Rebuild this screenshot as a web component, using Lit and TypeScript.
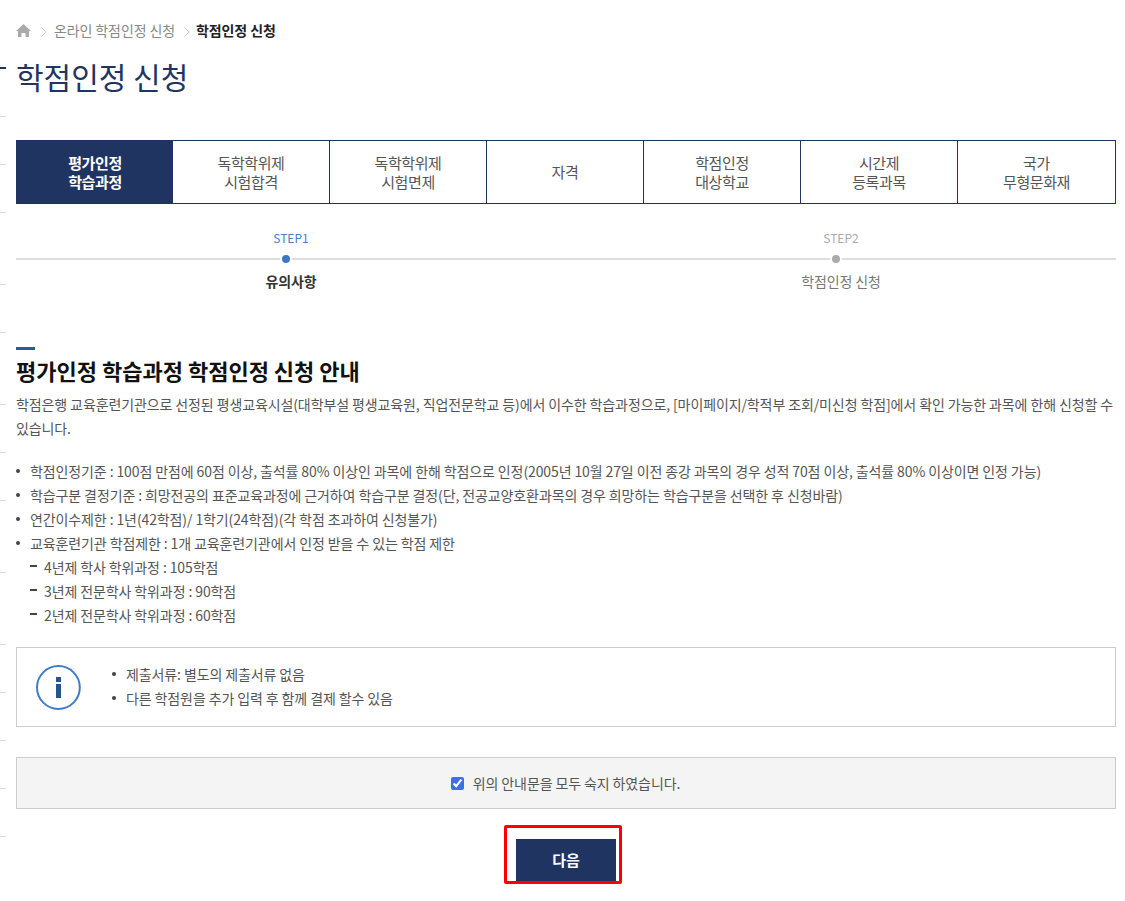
import { LitElement, html, css } from "lit";
import { customElement } from "lit/decorators.js";

const TICKS = [116, 164, 212, 284, 332, 404, 452, 500, 572, 644, 692, 740, 788, 836];
const TABS = [
  ["평가인정", "학습과정"],
  ["독학학위제", "시험합격"],
  ["독학학위제", "시험면제"],
  ["자격"],
  ["학점인정", "대상학교"],
  ["시간제", "등록과목"],
  ["국가", "무형문화재"],
];
const RULES = [
  "학점인정기준 : 100점 만점에 60점 이상, 출석률 80% 이상인 과목에 한해 학점으로 인정(2005년 10월 27일 이전 종강 과목의 경우 성적 70점 이상, 출석률 80% 이상이면 인정 가능)",
  "학습구분 결정기준 : 희망전공의 표준교육과정에 근거하여 학습구분 결정(단, 전공교양호환과목의 경우 희망하는 학습구분을 선택한 후 신청바람)",
  "연간이수제한 : 1년(42학점)/ 1학기(24학점)(각 학점 초과하여 신청불가)",
  "교육훈련기관 학점제한 : 1개 교육훈련기관에서 인정 받을 수 있는 학점 제한",
];
const SUB = ["4년제 학사 학위과정 : 105학점", "3년제 전문학사 학위과정 : 90학점", "2년제 전문학사 학위과정 : 60학점"];

@customElement("app-root")
export class AppRoot extends LitElement {
  static styles = css`
    :host {
      display: block;
      position: relative;
      box-sizing: border-box;
      width: 1125px;
      height: 901px;
      overflow: hidden;
      padding: 0 9px 0 16px;
      background: #fff;
      font-family: "Noto Sans CJK KR", "Noto Sans", sans-serif;
      font-size: 14px;
      letter-spacing: -0.11px;
      color: #555;
    }
    * { box-sizing: border-box; }
    .tick { position: absolute; left: 0; width: 6px; height: 1px; background: #ddd; }
    .tick.dark { height: 2px; background: #1f3461; }
    .crumbs { display: flex; align-items: center; height: 20px; margin-top: 20px; color: #888; line-height: 20px; }
    .crumbs svg { display: block; flex: none; }
    .home { margin-right: 10px; }
    .sep { margin: 3px 7px 0 0; }
    .sep.second { margin: 3px 6px 0 9px; }
    .crumbs b { color: #222; font-weight: 700; }
    h1 { margin: 15px 0 0; font-size: 30px; line-height: 42px; font-weight: 400; letter-spacing: 0; color: #1f3461; }
    .tabs { display: flex; margin-top: 43px; height: 64px; border: 1px solid #1f3461; }
    .tab {
      flex: 0 0 157px; display: flex; flex-direction: column; align-items: center; justify-content: center;
      padding-bottom: 1px; font-size: 15px; line-height: 19px; letter-spacing: -0.4px; color: #555;
      border-right: 1px solid #1f3461;
    }
    .tab:first-child { flex-basis: 156px; border-right: 0; background: #1f3461; color: #fff; font-weight: 700; }
    .tab:last-child { flex: 1 1 0; border-right: 0; }
    .steps { display: flex; position: relative; margin-top: 24px; height: 64px; }
    .steps::before { content: ""; position: absolute; left: 0; right: 0; top: 30px; height: 2px; background: #ddd; }
    .step { flex: 1; display: flex; flex-direction: column; align-items: center; position: relative; }
    .step .num { font-size: 12px; line-height: 20px; letter-spacing: 0; color: #aaa; }
    .step .dot {
      flex: none; box-sizing: content-box; position: relative; width: 8px; height: 8px; margin: 5px 10px 0 0;
      border-radius: 50%; background: #aaa; border: 2px solid #fff;
    }
    .step .name { margin-top: 6px; line-height: 20px; color: #777; }
    .step.on .num { color: #4f7cc4; }
    .step.on .dot { background: #3d78c6; }
    .step.on .name { color: #333; font-weight: 700; }
    .bar { width: 19px; height: 3px; margin-top: 55px; background: #2b5a94; }
    h2 { margin: 5px 0 0; font-size: 22px; line-height: 30px; font-weight: 700; letter-spacing: 0; color: #111; }
    .intro { margin: 7px 0 0; line-height: 24px; }
    ul { margin: 0; padding: 0; list-style: none; }
    .rules { margin-top: 19px; }
    .rules li { display: flex; line-height: 24px; }
    .rules li::before { content: ""; flex: none; width: 4px; height: 4px; margin: 10px 10px 0 0; border-radius: 50%; background: #444; }
    .subs li { display: flex; line-height: 24px; padding-left: 14px; }
    .subs li::before { content: ""; flex: none; width: 7px; height: 2px; margin: 10px 7px 0 0; background: #444; }
    .info { display: flex; align-items: center; height: 80px; margin-top: 20px; padding-left: 19px; border: 1px solid #ccc; }
    .info svg { display: block; flex: none; }
    .info ul { margin: -2px 0 0 30px; }
    .info li { display: flex; line-height: 24px; }
    .info li::before { content: ""; flex: none; width: 4px; height: 4px; margin: 10px 10px 0 0; border-radius: 50%; background: #444; }
    .agree {
      display: flex; align-items: center; justify-content: center; height: 52px; margin-top: 30px;
      background: #f4f4f4; border: 1px solid #ccc;
    }
    .agree input { width: 13px; height: 13px; margin: 0 9px 0 -1px; accent-color: #3f6fe8; }
    .actions { display: flex; margin: 16px 0 0 488px; }
    .mark { width: 118px; height: 59px; padding: 11px 3px 0 9px; border: 3px solid #f00; border-radius: 2px; }
    button {
      display: block; width: 100px; height: 42px; padding: 0 0 2px; border: 0; background: #1f3461; color: #fff;
      font: 700 15px "Noto Sans CJK KR", sans-serif;
    }
  `;

  render() {
    return html`
      <span class="tick dark" style="top:67px"></span>
      ${TICKS.map((y) => html`<span class="tick" style="top:${y}px"></span>`)}
      <nav class="crumbs">
        <svg class="home" width="15" height="13" viewBox="0 0 15 13"><path fill="#aaa" d="M7.5 0 15 7h-2v6H9.5V9h-4v4H2V7H0z"/></svg>
        <svg class="sep" width="6" height="10" viewBox="0 0 6 10"><path fill="none" stroke="#ccc" d="m.5.5 4.5 4.5-4.5 4.5"/></svg>
        <span>온라인 학점인정 신청</span>
        <svg class="sep second" width="6" height="10" viewBox="0 0 6 10"><path fill="none" stroke="#ccc" d="m.5.5 4.5 4.5-4.5 4.5"/></svg>
        <b>학점인정 신청</b>
      </nav>
      <h1>학점인정 신청</h1>
      <div class="tabs">
        ${TABS.map((t) => html`<div class="tab">${t.map((l) => html`<span>${l}</span>`)}</div>`)}
      </div>
      <div class="steps">
        <div class="step on"><span class="num">STEP1</span><span class="dot"></span><span class="name">유의사항</span></div>
        <div class="step"><span class="num">STEP2</span><span class="dot"></span><span class="name">학점인정 신청</span></div>
      </div>
      <div class="bar"></div>
      <h2>평가인정 학습과정 학점인정 신청 안내</h2>
      <p class="intro">학점은행 교육훈련기관으로 선정된 평생교육시설(대학부설 평생교육원, 직업전문학교 등)에서 이수한 학습과정으로, [마이페이지/학적부 조회/미신청 학점]에서 확인 가능한 과목에 한해 신청할 수 있습니다.</p>
      <ul class="rules">${RULES.map((r) => html`<li>${r}</li>`)}</ul>
      <ul class="subs">${SUB.map((r) => html`<li>${r}</li>`)}</ul>
      <div class="info">
        <svg width="46" height="46" viewBox="0 0 46 46">
          <circle cx="22.4" cy="23.5" r="21.4" fill="none" stroke="#3f7cc8" stroke-width="2"/>
          <rect x="20" y="13" width="5" height="5" fill="#25558f"/>
          <rect x="20" y="20" width="5" height="14" fill="#25558f"/>
        </svg>
        <ul>
          <li>제출서류: 별도의 제출서류 없음</li>
          <li>다른 학점원을 추가 입력 후 함께 결제 할수 있음</li>
        </ul>
      </div>
      <label class="agree"><input type="checkbox" checked /><span>위의 안내문을 모두 숙지 하였습니다.</span></label>
      <div class="actions"><div class="mark"><button>다음</button></div></div>
    `;
  }
}
